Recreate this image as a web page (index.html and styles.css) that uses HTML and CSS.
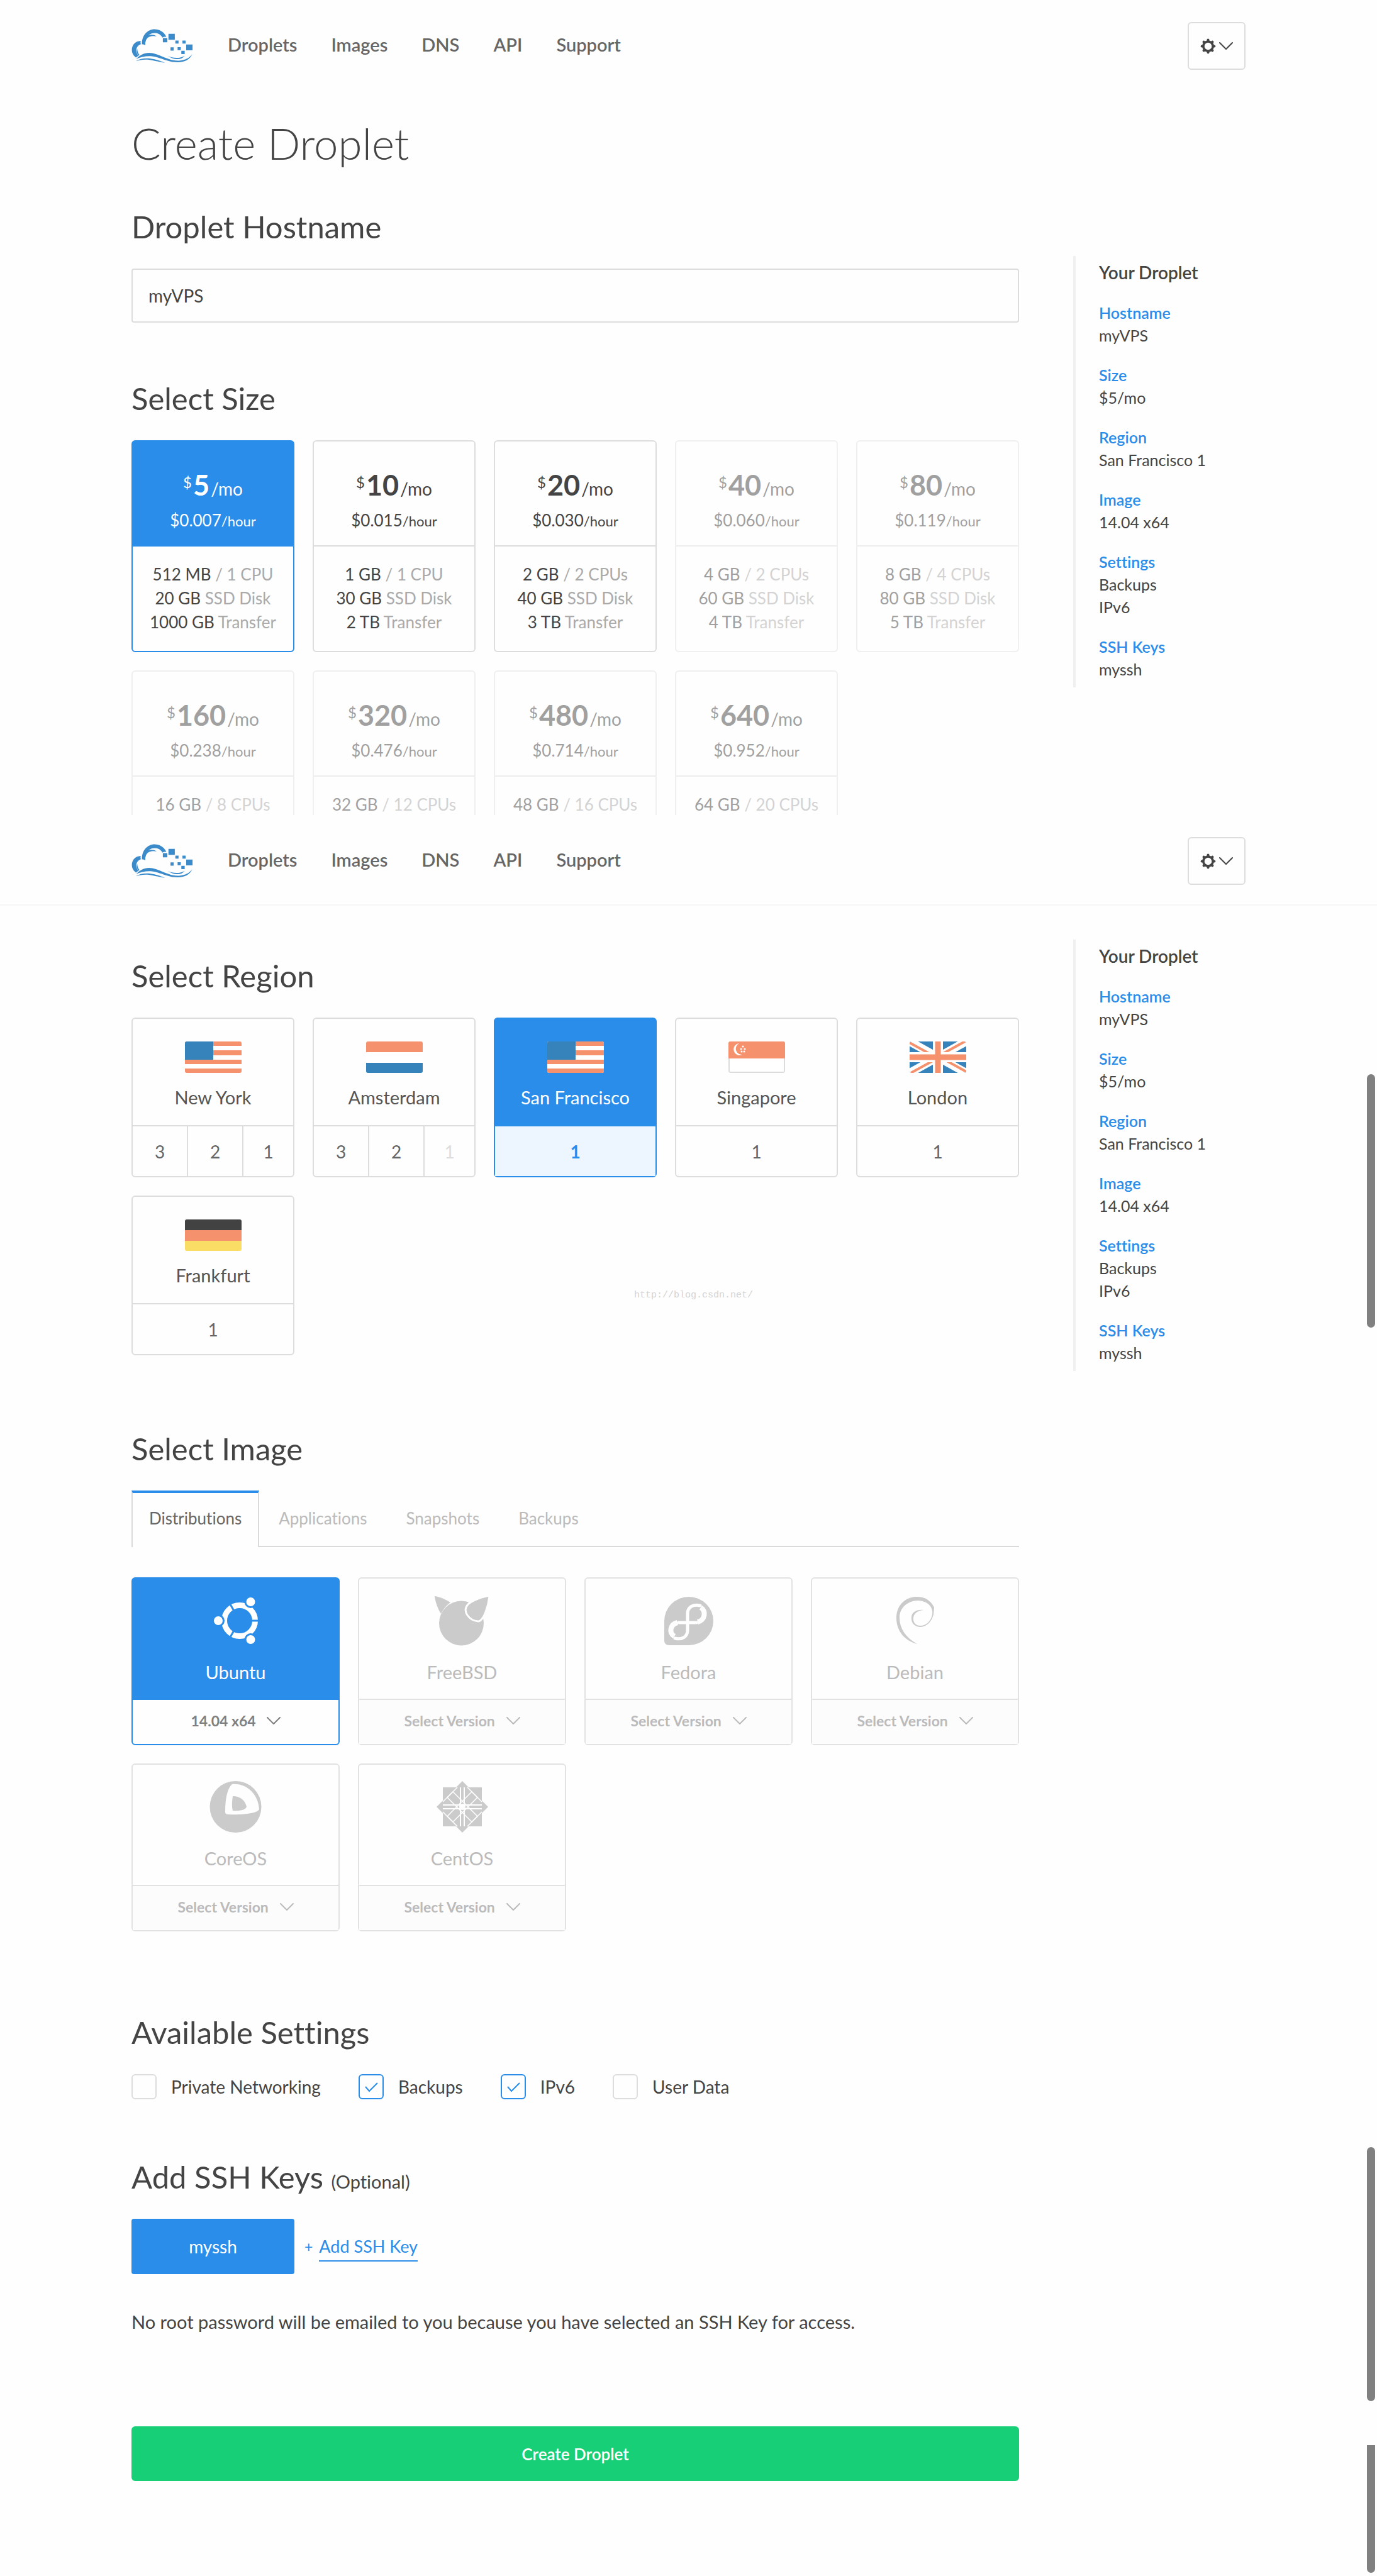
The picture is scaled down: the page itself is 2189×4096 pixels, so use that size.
FILE: index.html
```html
<!DOCTYPE html>
<html lang="en">
<head>
<meta charset="utf-8">
<title>Create Droplet</title>
<meta name="viewport" content="width=device-width, initial-scale=1">
<link rel="stylesheet" href="styles.css">
</head>
<body>
<svg class="sprite" aria-hidden="true">
  <symbol id="logo" viewBox="38 82 328 182">
    <path d="M93 165C91 117 123 84 160 84c29 0 52 16 64 40-8-1-16 1-21 4-12-20-33-28-56-22-24 7-38 32-36 64-5-4-12-6-18-5z"/>
    <path d="M110 162c2-28 20-48 62-40-15-11-36-11-52-2-10 10-14 25-10 42z"/>
    <path d="M86 146c-30 1-47 23-47 48 0 17 8 32 22 41l13-10c-17-18-17-50 13-61-2-6-2-12-1-18z"/>
    <path d="M68 188c-6 14-2 28 8 37l4-3c-8-10-12-21-12-34z"/>
    <path d="M62 243c22-23 50-38 88-31 52 12 92 43 142 40 33-2 55-14 70-34-12 28-38 42-76 43-56 1-104-31-146-33-30-1-56 6-78 15z"/>
    <path d="M60 255c28-18 68-18 100-10 24 5 40 12 57 18-28-3-56-11-82-15-30-4-50 0-75 7z"/>
    <path d="M230 226c28 14 66 16 92 0-16 24-58 24-92 0z"/>
    <path d="M205 131h24v23h-24zM235 108h34v32h-34zM272 144h17v16h-17zM310 144h17v16h-17zM330 165h34v32h-34zM246 181h17v17h-17zM284 180h17v16h-17zM304 199h18v18h-18z"/>
  </symbol>
  <symbol id="gear" viewBox="-42 -42 84 84">
    <circle r="25.500" fill="none" stroke="currentColor" stroke-width="12"/>
    <g fill="none" stroke="currentColor" stroke-width="14" stroke-linecap="round">
      <path d="M0-28v-5M0 28v5M-28 0h-5M28 0h5M20-20l3-3M20 20l3 3M-20-20l-3-3M-20 20l-3 3"/>
    </g>
  </symbol>
  <symbol id="chevron" viewBox="0 0 22 13">
    <path d="M1 1l10 10L21 1" fill="none" stroke="currentColor" stroke-width="2" stroke-linecap="round" stroke-linejoin="round"/>
  </symbol>
  <symbol id="flag-us" viewBox="0 0 90 50">
    <path fill="#fff" d="M0 0h90v50H0z"/>
    <path fill="#f6916e" d="M0 0h90v7H0zM0 14h90v8H0zM0 29h90v7H0zM0 43h90v7H0z"/>
    <path fill="#3583ba" d="M0 0h45v29H0z"/>
  </symbol>
  <symbol id="flag-nl" viewBox="0 0 90 50">
    <path fill="#fff" d="M0 0h90v50H0z"/>
    <path fill="#f6916e" d="M0 0h90v17H0z"/>
    <path fill="#3583ba" d="M0 34h90v16H0z"/>
  </symbol>
  <symbol id="flag-sg" viewBox="0 0 90 50">
    <rect x="1" y="1" width="88" height="48" rx="2" fill="#fff" stroke="#dcdcdc" stroke-width="2"/>
    <path fill="#f6916e" d="M0 0h90v27H0z"/>
    <path fill="#fff" d="M17 3a9.500 9.500 0 1 0 5 18 9.500 9.500 0 0 1-5-18z"/>
    <g fill="#fff"><circle cx="23" cy="8" r="1.500"/><circle cx="26" cy="12" r="1.500"/><circle cx="20" cy="12" r="1.500"/><circle cx="21" cy="16" r="1.500"/><circle cx="25" cy="16" r="1.500"/></g>
  </symbol>
  <symbol id="flag-gb" viewBox="0 0 90 50">
    <path fill="#3583ba" d="M0 0h90v50H0z"/>
    <path d="M0 0l90 50M90 0L0 50" stroke="#fff" stroke-width="13"/>
    <path d="M0 2l40 22M90 48L50 26M88 0L48 22M2 50l40-22" stroke="#f6916e" stroke-width="4"/>
    <path d="M45 0v50M0 25h90" stroke="#fff" stroke-width="16"/>
    <path d="M45 0v50M0 25h90" stroke="#f6916e" stroke-width="9"/>
  </symbol>
  <symbol id="flag-de" viewBox="0 0 90 50">
    <path fill="#424242" d="M0 0h90v17H0z"/>
    <path fill="#f6916e" d="M0 17h90v17H0z"/>
    <path fill="#f9dd65" d="M0 34h90v16H0z"/>
  </symbol>
</svg>

<section class="screen">
  <header class="topbar">
    <div class="wrap topbar-row">
      <a class="brand" href="#" aria-label="Home"><svg><use href="#logo"/></svg></a>
      <nav class="nav">
        <a href="#">Droplets</a><a href="#">Images</a><a href="#">DNS</a><a href="#">API</a><a href="#">Support</a>
      </nav>
      <button class="account" type="button" aria-label="Account settings"><svg class="gear"><use href="#gear"/></svg><svg class="chev"><use href="#chevron"/></svg></button>
    </div>
  </header>
  <div class="wrap layout">
    <main>
      <h1>Create Droplet</h1>
      <h2><label for="hostname">Droplet Hostname</label></h2>
      <input class="hostname" id="hostname" type="text" value="myVPS">
      <h2 class="after-field">Select Size</h2>
      <div class="plans">
        <button class="plan selected" type="button">
          <span class="plan-top"><span class="price"><sup>$</sup><b>5</b>/mo</span><span class="hour">$0.007<small>/hour</small></span></span>
          <span class="specs"><span>512 MB <i>/ 1 CPU</i></span><span>20 GB <i>SSD Disk</i></span><span>1000 GB <i>Transfer</i></span></span>
        </button>
        <button class="plan" type="button">
          <span class="plan-top"><span class="price"><sup>$</sup><b>10</b>/mo</span><span class="hour">$0.015<small>/hour</small></span></span>
          <span class="specs"><span>1 GB <i>/ 1 CPU</i></span><span>30 GB <i>SSD Disk</i></span><span>2 TB <i>Transfer</i></span></span>
        </button>
        <button class="plan" type="button">
          <span class="plan-top"><span class="price"><sup>$</sup><b>20</b>/mo</span><span class="hour">$0.030<small>/hour</small></span></span>
          <span class="specs"><span>2 GB <i>/ 2 CPUs</i></span><span>40 GB <i>SSD Disk</i></span><span>3 TB <i>Transfer</i></span></span>
        </button>
        <button class="plan" type="button" disabled>
          <span class="plan-top"><span class="price"><sup>$</sup><b>40</b>/mo</span><span class="hour">$0.060<small>/hour</small></span></span>
          <span class="specs"><span>4 GB <i>/ 2 CPUs</i></span><span>60 GB <i>SSD Disk</i></span><span>4 TB <i>Transfer</i></span></span>
        </button>
        <button class="plan" type="button" disabled>
          <span class="plan-top"><span class="price"><sup>$</sup><b>80</b>/mo</span><span class="hour">$0.119<small>/hour</small></span></span>
          <span class="specs"><span>8 GB <i>/ 4 CPUs</i></span><span>80 GB <i>SSD Disk</i></span><span>5 TB <i>Transfer</i></span></span>
        </button>
        <button class="plan" type="button" disabled>
          <span class="plan-top"><span class="price"><sup>$</sup><b>160</b>/mo</span><span class="hour">$0.238<small>/hour</small></span></span>
          <span class="specs"><span>16 GB <i>/ 8 CPUs</i></span></span>
        </button>
        <button class="plan" type="button" disabled>
          <span class="plan-top"><span class="price"><sup>$</sup><b>320</b>/mo</span><span class="hour">$0.476<small>/hour</small></span></span>
          <span class="specs"><span>32 GB <i>/ 12 CPUs</i></span></span>
        </button>
        <button class="plan" type="button" disabled>
          <span class="plan-top"><span class="price"><sup>$</sup><b>480</b>/mo</span><span class="hour">$0.714<small>/hour</small></span></span>
          <span class="specs"><span>48 GB <i>/ 16 CPUs</i></span></span>
        </button>
        <button class="plan" type="button" disabled>
          <span class="plan-top"><span class="price"><sup>$</sup><b>640</b>/mo</span><span class="hour">$0.952<small>/hour</small></span></span>
          <span class="specs"><span>64 GB <i>/ 20 CPUs</i></span></span>
        </button>
      </div>
    </main>
    <aside class="summary summary-low">
      <h3>Your Droplet</h3>
      <dl>
        <dt>Hostname</dt><dd>myVPS</dd>
        <dt>Size</dt><dd>$5/mo</dd>
        <dt>Region</dt><dd>San Francisco 1</dd>
        <dt>Image</dt><dd>14.04 x64</dd>
        <dt>Settings</dt><dd>Backups</dd><dd>IPv6</dd>
        <dt>SSH Keys</dt><dd>myssh</dd>
      </dl>
    </aside>
  </div>
</section>

<section class="screen">
  <header class="topbar topbar-ruled">
    <div class="wrap topbar-row">
      <a class="brand" href="#" aria-label="Home"><svg><use href="#logo"/></svg></a>
      <nav class="nav">
        <a href="#">Droplets</a><a href="#">Images</a><a href="#">DNS</a><a href="#">API</a><a href="#">Support</a>
      </nav>
      <button class="account" type="button" aria-label="Account settings"><svg class="gear"><use href="#gear"/></svg><svg class="chev"><use href="#chevron"/></svg></button>
    </div>
  </header>
  <div class="wrap layout">
    <main>
      <h2 class="first">Select Region</h2>
      <div class="regions">
        <div class="region">
          <div class="region-top"><svg class="flag"><use href="#flag-us"/></svg><span>New York</span></div>
          <div class="slots"><button type="button">3</button><button type="button">2</button><button type="button">1</button></div>
        </div>
        <div class="region">
          <div class="region-top"><svg class="flag"><use href="#flag-nl"/></svg><span>Amsterdam</span></div>
          <div class="slots"><button type="button">3</button><button type="button">2</button><button type="button" disabled>1</button></div>
        </div>
        <div class="region selected">
          <div class="region-top"><svg class="flag"><use href="#flag-us"/></svg><span>San Francisco</span></div>
          <div class="slots"><button type="button">1</button></div>
        </div>
        <div class="region">
          <div class="region-top"><svg class="flag"><use href="#flag-sg"/></svg><span>Singapore</span></div>
          <div class="slots"><button type="button">1</button></div>
        </div>
        <div class="region">
          <div class="region-top"><svg class="flag"><use href="#flag-gb"/></svg><span>London</span></div>
          <div class="slots"><button type="button">1</button></div>
        </div>
        <div class="region">
          <div class="region-top"><svg class="flag"><use href="#flag-de"/></svg><span>Frankfurt</span></div>
          <div class="slots"><button type="button">1</button></div>
        </div>
        <span class="watermark">http://blog.csdn.net/</span>
      </div>

      <h2 class="after-regions">Select Image</h2>
      <div class="tabs" role="tablist">
        <button type="button" role="tab" aria-selected="true">Distributions</button>
        <button type="button" role="tab" aria-selected="false">Applications</button>
        <button type="button" role="tab" aria-selected="false">Snapshots</button>
        <button type="button" role="tab" aria-selected="false">Backups</button>
      </div>
      <div class="images">
        <div class="image selected">
          <button class="image-top" type="button">
            <svg viewBox="-10 -5 90 84" fill="currentColor"><circle cx="41" cy="37" r="24.500" fill="none" stroke="currentColor" stroke-width="9"/><path d="M41 37h34M41 37L24 7.600M41 37L24 66.400" stroke="#2a8dea" stroke-width="3"/><g stroke="#2a8dea" stroke-width="3"><circle cx="7" cy="37" r="8.500"/><circle cx="58.500" cy="7" r="8.500"/><circle cx="58.500" cy="67" r="8.500"/></g></svg>
            <span>Ubuntu</span>
          </button>
          <label class="version"><select aria-label="Ubuntu version"><option>14.04 x64</option></select><svg class="chev"><use href="#chevron"/></svg></label>
        </div>
        <div class="image">
          <button class="image-top" type="button">
            <svg viewBox="-1 -2 90 84" fill="currentColor"><circle cx="42.500" cy="44" r="35.500"/><path d="M0 1c8 1 17 5 25 10-6 4-11 10-15 18C5 21 1 10 0 1z"/><path d="M87 0C75 2 59 8 53 14c-10 11 2 26 16 27 9 0 17-26 18-41z" stroke="#fefefe" stroke-width="3"/></svg>
            <span>FreeBSD</span>
          </button>
          <label class="version"><select aria-label="FreeBSD version"><option>Select Version</option></select><svg class="chev"><use href="#chevron"/></svg></label>
        </div>
        <div class="image">
          <button class="image-top" type="button">
            <svg viewBox="-6 -4 90 84" fill="currentColor"><path d="M39 0a39 38.500 0 0 1 0 77H7a7 7 0 0 1-7-7V38.500A39 38.500 0 0 1 39 0z"/><g fill="none" stroke="#fefefe" stroke-linecap="round"><path d="M57 14c-12-3-20 3-20 13v26c0 10-8 16-20 13M23 41h28" stroke-width="5"/><path d="M58 17c9 6 7 20-5 23M16 63c-9-6-7-19 5-22" stroke-width="8" stroke-linecap="butt"/></g></svg>
            <span>Fedora</span>
          </button>
          <label class="version"><select aria-label="Fedora version"><option>Select Version</option></select><svg class="chev"><use href="#chevron"/></svg></label>
        </div>
        <div class="image">
          <button class="image-top" type="button">
            <svg viewBox="-15 -4 90 84" fill="currentColor"><path d="M33 75C13 70 0 54 0 34 0 14 13 1 31 0c13-1 24 6 29 17l-1 11c-3 12-11 20-22 20-9-1-14-7-13-16 1-8 8-12 19-11-9 1-15 5-16 12-1 8 4 13 11 13 9 0 17-7 19-18C59 14 47 6 33 6 17 7 5 18 5 33c0 18 10 32 28 42z"/></svg>
            <span>Debian</span>
          </button>
          <label class="version"><select aria-label="Debian version"><option>Select Version</option></select><svg class="chev"><use href="#chevron"/></svg></label>
        </div>
        <div class="image">
          <button class="image-top" type="button">
            <svg viewBox="-4 -1 90 84" fill="currentColor"><circle cx="40.500" cy="41" r="41"/><path fill="#fefefe" d="M35 5c25-2 42 18 43 40-3 6-24 9-49 8-3 0-5-1-5-4 0-20 3-37 11-44z"/><path d="M36 24c12 0 20 7 22 17-2 5-11 7-22 6-2-7-1-16 0-23z"/></svg>
            <span>CoreOS</span>
          </button>
          <label class="version"><select aria-label="CoreOS version"><option>Select Version</option></select><svg class="chev"><use href="#chevron"/></svg></label>
        </div>
        <div class="image">
          <button class="image-top" type="button">
            <svg viewBox="-45 -42 90 84" fill="currentColor">
              <path d="M-31-31h62v62h-62z"/><path d="M0-41l12 12h-24zM0 41l12-12h-24zM-41 0l12-12v24zM41 0L29-12v24z"/>
              <g fill="none" stroke="#fefefe" stroke-width="2">
                <path d="M-3-31V31M3-31V31M-31-3H31M-31 3H31"/>
                <path d="M8-31L24-15 4 5M8 31L24 15 4-5M-8-31L-24-15-4 5M-8 31L-24 15-4-5" stroke-width="1.500"/>
                <path d="M31-8L15-24-5-4M31 8L15 24-5 4M-31-8L-15-24 5-4M-31 8L-15 24 5 4" stroke-width="1.500"/>
              </g>
              <circle r="5" fill="#fefefe"/>
            </svg>
            <span>CentOS</span>
          </button>
          <label class="version"><select aria-label="CentOS version"><option>Select Version</option></select><svg class="chev"><use href="#chevron"/></svg></label>
        </div>
      </div>

      <h2 class="after-images">Available Settings</h2>
      <div class="settings">
        <label><input type="checkbox">Private Networking</label>
        <label><input type="checkbox" checked>Backups</label>
        <label><input type="checkbox" checked>IPv6</label>
        <label><input type="checkbox">User Data</label>
      </div>

      <h2 class="after-settings">Add SSH Keys <small>(Optional)</small></h2>
      <div class="keys">
        <button class="key" type="button">myssh</button>
        <span class="plus">+</span><a href="#">Add SSH Key</a>
      </div>
      <p class="note">No root password will be emailed to you because you have selected an SSH Key for access.</p>
      <button class="create" type="submit">Create Droplet</button>
    </main>
    <aside class="summary">
      <h3>Your Droplet</h3>
      <dl>
        <dt>Hostname</dt><dd>myVPS</dd>
        <dt>Size</dt><dd>$5/mo</dd>
        <dt>Region</dt><dd>San Francisco 1</dd>
        <dt>Image</dt><dd>14.04 x64</dd>
        <dt>Settings</dt><dd>Backups</dd><dd>IPv6</dd>
        <dt>SSH Keys</dt><dd>myssh</dd>
      </dl>
    </aside>
  </div>
  <div class="thumb thumb-a"></div>
  <div class="thumb thumb-b"></div>
  <div class="thumb thumb-c"></div>
</section>
</body>
</html>
```
FILE: styles.css
```css
:root {
  --blue: #2a8dea;
  --ink: #444;
  --line: #ddd;
  --paper: #fefefe;
}

* { box-sizing: border-box; }

body {
  margin: 0;
  background: var(--paper);
  color: var(--ink);
  font: 400 28px/36px Lato, "Open Sans", sans-serif;
  font-variant-ligatures: none;
}

button, input, select { font: inherit; color: inherit; margin: 0; }
button { background: none; border: 0; padding: 0; cursor: pointer; }
h1, h2, h3, p, dl, dd { margin: 0; }
svg { display: block; }
.sprite { position: absolute; width: 0; height: 0; }

.screen { position: relative; }
.wrap { max-width: 1771px; margin: 0 auto; }

/* Top bar */
.topbar { border-bottom: 2px solid transparent; }
.topbar-ruled { border-color: #f6f6f6; }
.topbar-row { display: flex; align-items: center; height: 142px; padding-top: 4px; }
.brand { margin-right: 55px; }
.brand svg { width: 98px; height: 54px; fill: #3b8bcb; }
.nav { display: flex; gap: 54px; flex: 1; padding-bottom: 4px; font-size: 29px; }
.nav a { color: #666; font-weight: 600; text-decoration: none; }
.account {
  display: flex; align-items: center; justify-content: center; gap: 5px;
  width: 92px; height: 76px;
  border: 2px solid var(--line); border-radius: 6px;
}
.gear { width: 25px; height: 25px; }
.chev { width: 22px; height: 13px; }

/* Page columns */
.layout { display: grid; grid-template-columns: 1fr 274px; gap: 86px; align-items: start; }

h1 { margin-top: 44px; font-size: 69px; line-height: 80px; font-weight: 300; }
h2 { margin: 64px 0 39px; font-size: 49px; line-height: 56px; font-weight: 400; }
h2.first { margin-top: 83px; }
h2.after-field { margin-top: 92px; }
h2.after-regions { margin-top: 120px; }
h2.after-images { margin-top: 132px; }
h2.after-settings { margin-top: 95px; }
h2 small { font-size: 29px; line-height: 1; }

.hostname {
  display: block; width: 100%; height: 86px; padding: 0 25px;
  background: none; border: 2px solid var(--line); border-radius: 4px;
}

/* Size cards */
.plans {
  display: grid; grid-template-columns: repeat(5, 1fr); gap: 29px;
  max-height: 596px; overflow: hidden;
}
.plan {
  display: flex; flex-direction: column; min-height: 337px;
  border: 2px solid var(--line); border-radius: 6px;
}
.plan:disabled { opacity: .5; border-color: #e2e2e2; color: var(--ink); }
.plan-top {
  display: flex; flex-direction: column; gap: 16px; width: 100%;
  padding: 47px 0 24px; border-bottom: 2px solid var(--line);
}
.price { font-size: 28px; line-height: 36px; }
.price b { font-size: 45px; line-height: 44px; font-weight: 700; margin: 0 2px; }
.price sup { font-size: 24px; line-height: 1; vertical-align: 12px; }
.hour { font-size: 26px; line-height: 32px; }
.hour small { font-size: 22px; line-height: 1; }
.specs { display: flex; flex-direction: column; width: 100%; padding: 25px 0 27px; font-size: 26px; line-height: 38px; }
.specs i { font-style: normal; color: #aaa; }
.selected { border-color: var(--blue); }
.plan.selected .plan-top { background: var(--blue); border-color: var(--blue); color: #fff; }

/* Summary column */
.summary { margin-top: 54px; padding: 8px 0 11px 37px; border-left: 4px solid #f0f0f0; font-size: 25px; }
.summary-low { margin-top: 263px; }
.summary h3 { margin-bottom: 28px; font-size: 28px; font-weight: 600; }
.summary dt { color: var(--blue); font-weight: 600; }
.summary dd + dt { margin-top: 27px; }

/* Region cards */
.regions { position: relative; display: grid; grid-template-columns: repeat(5, 1fr); gap: 29px; }
.region { border: 2px solid var(--line); border-radius: 6px; }
.region-top {
  display: flex; flex-direction: column; align-items: center; gap: 21px;
  padding: 36px 0 26px; border-bottom: 2px solid var(--line);
}
.flag { width: 90px; height: 50px; border-radius: 3px; }
.region-top span { color: #555; font-size: 29px; }
.slots { display: flex; height: 79px; color: #666; }
.slots button { width: 88px; border-right: 2px solid var(--line); }
.slots button:last-child { width: auto; flex: 1; border-right: 0; }
.slots button:disabled { color: var(--line); }
.region.selected { border-color: var(--blue); }
.selected .region-top { background: var(--blue); border-color: var(--blue); }
.selected .region-top span { color: #fff; }
.selected .slots { background: #edf5fe; color: var(--blue); font-weight: 700; }
.watermark {
  position: absolute; left: 799px; top: 432px;
  color: #d4d4d4; font: 15px/20px "Liberation Mono", monospace;
}

/* Image tabs */
.tabs { display: flex; height: 90px; border-bottom: 2px solid #dadada; }
.tabs button { padding: 0 31px; color: #bbb; font-size: 26px; }
.tabs button[aria-selected="true"] {
  height: 90px; padding: 0 26px 6px; color: #666; background: var(--paper);
  border: 2px solid #dadada; border-top: 4px solid var(--blue); border-bottom: 0;
}

/* Image cards */
.images { display: grid; grid-template-columns: repeat(4, 1fr); gap: 29px; margin-top: 48px; }
.image { border: 2px solid #e2e2e2; border-radius: 6px; color: #cbcbcb; }
.image-top {
  display: flex; flex-direction: column; align-items: center; gap: 22px; width: 100%;
  padding: 25px 0 24px; border-bottom: 2px solid #e2e2e2;
}
.image-top svg { width: 90px; height: 84px; }
.image-top span { color: #bbb; font-size: 29px; }
.version {
  display: flex; align-items: center; justify-content: center; gap: 16px;
  height: 70px; padding-bottom: 4px; background: #fcfcfc; color: #bbb; font-size: 23px; font-weight: 700;
}
.version select { appearance: none; padding: 0; border: 0; background: none; }
.image.selected { border-color: var(--blue); }
.selected .image-top { background: var(--blue); border-color: var(--blue); color: #fff; }
.selected .image-top span { color: #fff; }
.selected .version { background: none; color: #808080; }

/* Settings */
.settings { display: flex; gap: 60px; }
.settings label { display: flex; align-items: center; gap: 23px; height: 40px; }
.settings input {
  appearance: none; width: 40px; height: 40px;
  border: 2px solid var(--line); border-radius: 6px;
}
.settings input:checked {
  border-color: var(--blue);
  background: url("data:image/svg+xml,%3Csvg xmlns='http://www.w3.org/2000/svg' viewBox='0 0 36 36'%3E%3Cpath d='M9 18l6 7L28 12' fill='none' stroke='%232a8dea' stroke-width='2'/%3E%3C/svg%3E") center / contain no-repeat;
}

/* SSH keys */
.keys { display: flex; align-items: center; color: var(--blue); }
.key { width: 259px; height: 88px; background: var(--blue); border-radius: 4px; color: #fff; }
.plus { margin: 0 10px 0 16px; font-size: 23px; }
.keys a { padding: 6px 0 4px; color: inherit; font-size: 27px; text-decoration: none; border-bottom: 2px solid; }
.note { margin: 56px 0 146px; font-size: 29px; line-height: 40px; }
.create {
  display: block; width: 100%; height: 87px; margin-bottom: 151px;
  background: #17cf76; border-radius: 6px; color: #fff; font-size: 26px; font-weight: 600;
}

/* Scroll thumbs lying over the right edge */
.thumb { position: absolute; right: 3px; width: 13px; border-radius: 7px; background: #808080; }
.thumb-a { top: 412px; height: 403px; }
.thumb-b { top: 2118px; height: 404px; }
.thumb-c { bottom: 5px; height: 203px; border-radius: 0 0 7px 7px; }
```
